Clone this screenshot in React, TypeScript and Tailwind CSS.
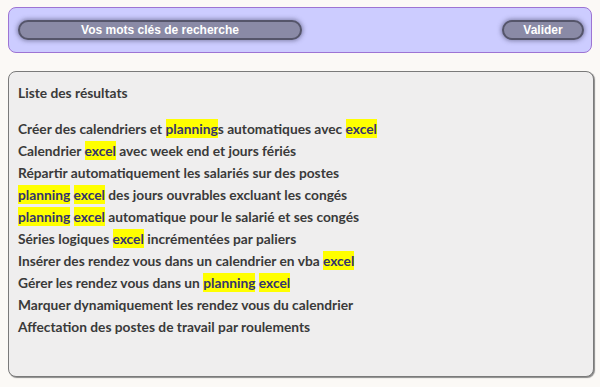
const lines: (string | [string])[][] = [
  ["Créer des calendriers et ", ["planning"], "s automatiques avec ", ["excel"]],
  ["Calendrier ", ["excel"], " avec week end et jours fériés"],
  ["Répartir automatiquement les salariés sur des postes"],
  [["planning"], " ", ["excel"], " des jours ouvrables excluant les congés"],
  [["planning"], " ", ["excel"], " automatique pour le salarié et ses congés"],
  ["Séries logiques ", ["excel"], " incrémentées par paliers"],
  ["Insérer des rendez vous dans un calendrier en vba ", ["excel"]],
  ["Gérer les rendez vous dans un ", ["planning"], " ", ["excel"]],
  ["Marquer dynamiquement les rendez vous du calendrier"],
  ["Affectation des postes de travail par roulements"],
];

const PillButton = ({ label, className }: { label: string; className: string }) => (
  <button
    className={
      "h-5 rounded-full border-2 border-[#55556a] bg-[#8a8aa6] text-[12px] font-bold leading-none text-white shadow-[0_0_4px_1px_rgba(60,60,90,0.5)] " +
      className
    }
    style={{ fontFamily: '"Liberation Sans", Arial, sans-serif' }}
  >
    {label}
  </button>
);

export default function App() {
  return (
    <div className="h-[387px] w-[600px] bg-[#fbf9f6] pt-[7px]">
      <div className="mx-2 flex h-[46px] items-center justify-between rounded-lg border border-[#9d74d4] bg-[#ccccff] pl-[9px] pr-[7px]">
        <PillButton label="Vos mots clés de recherche" className="w-[284px]" />
        <PillButton label="Valider" className="w-[82px]" />
      </div>
      <div
        className="mx-2 mt-[18px] h-[306px] w-[586px] rounded-lg border border-[#7a7a7a] bg-[#efeeee] px-[9px] pt-[10px] text-[13.75px] font-bold text-[#3a3a3a] shadow-[1px_1px_1px_#8a8a8a]"
        style={{ fontFamily: 'Lato, "Open Sans", sans-serif' }}
      >
        <div className="leading-[22px]">Liste des résultats</div>
        <div className="mt-[14px]">
          {lines.map((segs, i) => (
            <div key={i} className="leading-[22px]">
              {segs.map((s, j) =>
                typeof s === "string" ? (
                  <span key={j}>{s}</span>
                ) : (
                  <span key={j} className="bg-[#ffff00] py-[1px] text-[#34346e]">
                    {s[0]}
                  </span>
                )
              )}
            </div>
          ))}
        </div>
      </div>
    </div>
  );
}
